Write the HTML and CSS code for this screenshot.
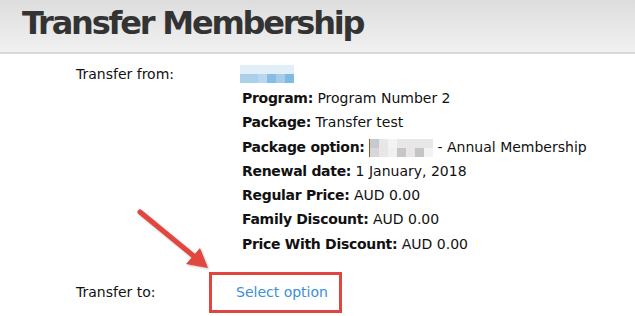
FILE: index.html
```html
<!DOCTYPE html>
<html lang="en">
<head>
  <meta charset="UTF-8">
  <meta name="viewport" content="width=device-width, initial-scale=1.0">
  <title>Transfer Membership</title>
  <link rel="stylesheet" href="styles.css">
</head>
<body>
  <div class="page-header">
    <h1>Transfer Membership</h1>
  </div>

  <div class="transfer">
    <div class="row from">
      <div class="label">Transfer from:</div>
      <div class="value">
        <div class="blur blur-name">
          <span></span><span></span><span></span><span></span><span></span><span></span>
          <span></span><span></span><span></span><span></span><span></span><span></span>
        </div>
        <ul class="details">
          <li><b>Program:</b> Program Number 2</li>
          <li><b>Package:</b> Transfer test</li>
          <li><b>Package option:</b> <span class="blur blur-option">
            <span></span><span></span><span></span><span></span><span></span><span></span><span></span>
            <span></span><span></span><span></span><span></span><span></span><span></span><span></span>
          </span> - Annual Membership</li>
          <li><b>Renewal date:</b> 1 January, 2018</li>
          <li><b>Regular Price:</b> AUD 0.00</li>
          <li><b>Family Discount:</b> AUD 0.00</li>
          <li><b>Price With Discount:</b> AUD 0.00</li>
        </ul>
      </div>
    </div>

    <div class="row to">
      <div class="label">Transfer to:</div>
      <div class="value">
        <a href="#" class="select-option">Select option</a>
      </div>
    </div>
  </div>

  <!-- annotation arrow -->
  <svg class="arrow" width="90" height="70" viewBox="0 0 90 70">
    <line x1="6" y1="6" x2="62" y2="52" stroke="#e2463f" stroke-width="5" stroke-linecap="round"/>
    <polygon points="74,62 52,58 66,42" fill="#e2463f"/>
  </svg>
</body>
</html>
```

FILE: styles.css
```css
body {
  margin: 0;
  font-family: "DejaVu Sans", Verdana, sans-serif;
  font-size: 14px;
  color: #111;
  background-color: #fff;
}

.page-header {
  height: 52px;
  background: linear-gradient(#dddddd, #f1f1f1);
  border-bottom: 2px solid #d9d9d9;
}

.page-header h1 {
  margin: 0;
  padding: 3px 0 0 22px;
  font-size: 32px;
  line-height: 40px;
  font-weight: bold;
  color: #333;
  letter-spacing: -2.2px;
}

.transfer {
  padding: 7px 0 0 76px;
}

.row {
  display: grid;
  grid-template-columns: 166px auto;
}

.label {
  line-height: 24px;
  padding-top: 1px;
}

.blur {
  display: inline-grid;
  grid-template-rows: 9px 9px;
}

.blur-name {
  grid-template-columns: repeat(6, 9px);
  margin-left: -2px;
}

.blur-name span:nth-child(-n+6) { background-color: #e2eff8; }
.blur-name span:nth-child(7),
.blur-name span:nth-child(8) { background-color: #accfea; }
.blur-name span:nth-child(9) { background-color: #b9d8ee; }
.blur-name span:nth-child(10) { background-color: #87bde4; }
.blur-name span:nth-child(11) { background-color: #a7ccea; }
.blur-name span:nth-child(12) { background-color: #7fbae2; }

.blur-option {
  grid-template-columns: repeat(7, 9px);
  vertical-align: middle;
  border-left: 1px solid #8a5a2a;
}

.blur-option span { background-color: #e8e6e6; }
.blur-option span:nth-child(1) { background-color: #c8c8cf; }
.blur-option span:nth-child(3) { background-color: #f3f3f3; }
.blur-option span:nth-child(8) { background-color: #d6d6db; }
.blur-option span:nth-child(10) { background-color: #f0f0f0; }
.blur-option span:nth-child(11) { background-color: #c7c6c4; }
.blur-option span:nth-child(13) { background-color: #c5c4c4; }
.blur-option span:nth-child(14) { background-color: #f2f2f2; }

.details {
  list-style: none;
  margin: 3px 0 0;
  padding: 0;
}

.details li {
  height: 24.3px;
  line-height: 24.3px;
}

.details b {
  letter-spacing: -0.3px;
}

.row.to {
  margin-top: 16px;
}

.row.to .label {
  padding-top: 8px;
}

.select-option {
  display: inline-block;
  margin-left: -33px;
  width: 103px;
  height: 35px;
  line-height: 35px;
  padding-left: 24px;
  box-sizing: content-box;
  border: 3px solid #e0453f;
  color: #3a8fd9;
  text-decoration: none;
}

.arrow {
  position: absolute;
  left: 134px;
  top: 206px;
  filter: drop-shadow(1px 1px 1px rgba(0, 0, 0, 0.25));
}
```
